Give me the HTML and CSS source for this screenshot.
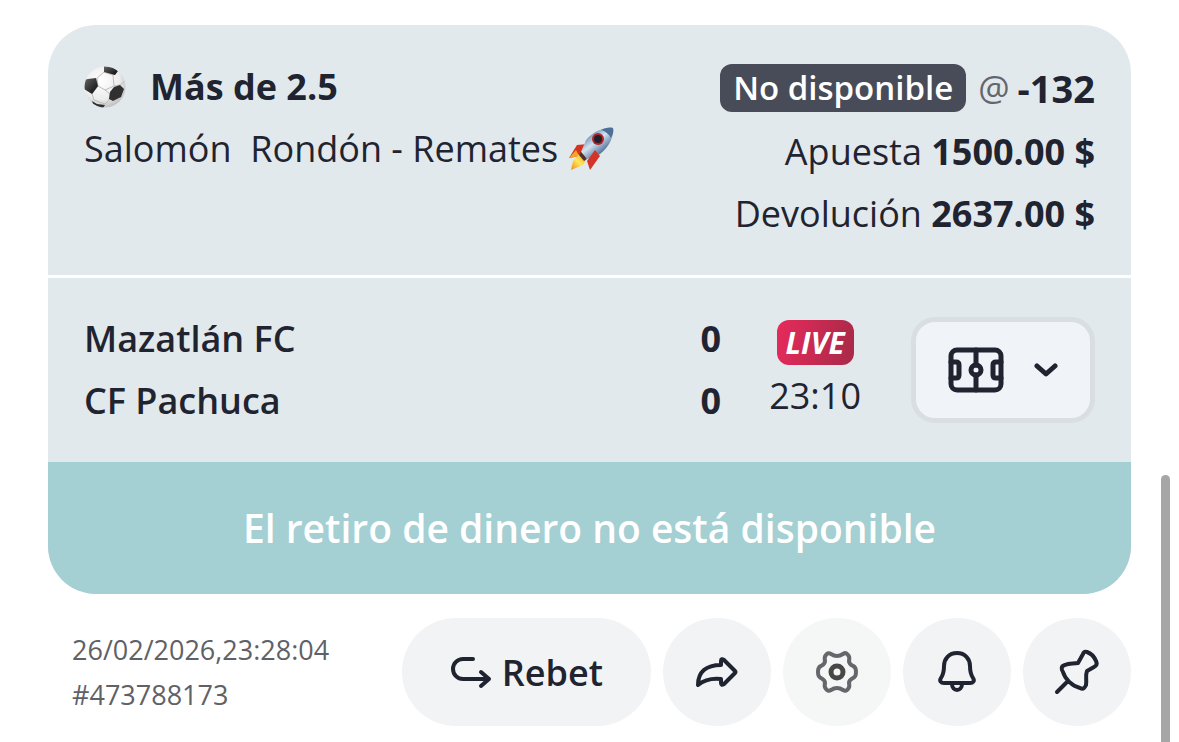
FILE: index.html
```html
<!DOCTYPE html>
<html lang="es">
<head>
    <meta charset="UTF-8">
    <meta name="viewport" content="width=device-width, initial-scale=1.0">
    <title>Apuesta #473788173</title>
    <link rel="stylesheet" href="styles.css">
</head>
<body>
    <main class="page">
        <article class="bet-card">
            <section class="bet-info">
                <div class="bet-pick">
                    <h1 class="pick-title">
                        <svg class="ball" viewBox="0 0 42 42" aria-hidden="true">
                            <defs>
                                <radialGradient id="ballShade" cx="0.4" cy="0.35" r="0.65">
                                    <stop offset="0" stop-color="#ffffff"/>
                                    <stop offset="0.7" stop-color="#ececec"/>
                                    <stop offset="1" stop-color="#c4c4c4"/>
                                </radialGradient>
                                <linearGradient id="patchShade" x1="0" y1="0" x2="1" y2="1">
                                    <stop offset="0" stop-color="#666"/>
                                    <stop offset="1" stop-color="#080808"/>
                                </linearGradient>
                                <clipPath id="ballClip"><circle cx="21" cy="21" r="20.5"/></clipPath>
                            </defs>
                            <circle cx="21" cy="21" r="20.5" fill="url(#ballShade)"/>
                            <g clip-path="url(#ballClip)">
                                <path d="M13 12L20 6L29 9L30 20L21 24L14 20Z M14 20L8 28L10 34L21 38L25 34L26 28L21 24 M30 20L36 19L41 15 M29 9L33 6" fill="none" stroke="#bdbdbd" stroke-width="1"/>
                                <path d="M20 0L30 1L34 5L31 9L20 6Z" fill="url(#patchShade)"/>
                                <path d="M0 14L4 13L12 12L14 20L8 28L0 23Z" fill="url(#patchShade)"/>
                                <path d="M30 21L36 19L40 23L37 31L29 35L25 33L26 26Z" fill="#303030"/>
                                <path d="M8 35L13 38L21 39L19 42L10 41Z" fill="#303030"/>
                            </g>
                        </svg>
                        Más de 2.5
                    </h1>
                    <p class="pick-market">Salomón&nbsp; Rondón - Remates
                        <svg class="rocket" viewBox="0 0 46 46" role="img" aria-label="cohete">
                            <defs>
                                <linearGradient id="hull" x1="0.2" y1="0.2" x2="0.7" y2="0.8">
                                    <stop offset="0" stop-color="#5f86ae"/>
                                    <stop offset="0.45" stop-color="#d5e2ee"/>
                                    <stop offset="1" stop-color="#466a96"/>
                                </linearGradient>
                                <linearGradient id="flame" x1="1" y1="0" x2="0" y2="1">
                                    <stop offset="0" stop-color="#f5a21b"/>
                                    <stop offset="0.5" stop-color="#ffe65a"/>
                                    <stop offset="1" stop-color="#f08a1a"/>
                                </linearGradient>
                            </defs>
                            <path d="M20 18L9 19L1 32L12 30L17 32Z" fill="#d8321f"/>
                            <path d="M1 32L8 24L11 30Z" fill="#f6a52c"/>
                            <path d="M11 28L18 34L15 39L3 44L5 35Z" fill="url(#flame)"/>
                            <path d="M45 2C35 1 25 6 18 14L13 26L19 33L32 28C40 22 46 12 45 2Z" fill="url(#hull)"/>
                            <path d="M45 2C41 1 37 2 33 4C37 5 41 8 43 12C45 8 46 5 45 2Z" fill="#4f7096"/>
                            <path d="M13 26L19 33L16 35L11 29Z" fill="#4a3230"/>
                            <path d="M27 24L32 30L22 44L19 35Z" fill="#d43428"/>
                            <circle cx="30" cy="13" r="6" fill="#b3242a"/>
                            <circle cx="30" cy="13" r="4" fill="#241e2b"/>
                        </svg>
                    </p>
                </div>
                <div class="bet-amounts">
                    <p class="odds"><span class="status">No disponible</span><span class="at">@</span><strong class="odds-value">-132</strong></p>
                    <p>Apuesta <strong>1500.00 $</strong></p>
                    <p>Devolución <strong>2637.00 $</strong></p>
                </div>
            </section>

            <section class="match">
                <div class="teams">
                    <div class="team"><span>Mazatlán FC</span><strong>0</strong></div>
                    <div class="team"><span>CF Pachuca</span><strong>0</strong></div>
                </div>
                <div class="clock">
                    <span class="live">LIVE</span>
                    <time>23:10</time>
                </div>
                <button class="field-btn" type="button" aria-label="Ver campo">
                    <svg class="icon-field" viewBox="0 0 56 46" aria-hidden="true">
                        <rect x="3" y="3" width="50" height="40" rx="6"/>
                        <path d="M28 3V18M28 28V43M3 15H8Q11 15 11 18V28Q11 31 8 31H3M53 15H48Q45 15 45 18V28Q45 31 48 31H53"/>
                        <circle cx="28" cy="23" r="5"/>
                    </svg>
                    <svg class="icon-chevron" viewBox="0 0 24 14" aria-hidden="true">
                        <path d="M3 3L12 11L21 3"/>
                    </svg>
                </button>
            </section>

            <button class="cashout" type="button" disabled>El retiro de dinero no está disponible</button>
        </article>

        <footer class="bet-footer">
            <div class="bet-meta">
                <time>26/02/2026,23:28:04</time>
                <span>#473788173</span>
            </div>
            <div class="actions">
                <button class="action rebet" type="button">
                    <svg class="icon" viewBox="0 0 42 42" aria-hidden="true">
                        <path d="M23 8H13A10 10 0 0 0 13 28H39M31 21L39 28L31 35"/>
                    </svg>
                    Rebet
                </button>
                <button class="action" type="button" aria-label="Compartir">
                    <svg class="icon" viewBox="0 0 42 42" aria-hidden="true">
                        <path d="M25 14V10Q25 7 28 9L39 20Q40 21 39 22L28 33Q25 35 25 32V28C15 27 8 29 2 34C2 21 10 14 25 14Z"/>
                    </svg>
                </button>
                <button class="action settings" type="button" aria-label="Ajustes">
                    <svg class="icon" viewBox="0 0 42 42" aria-hidden="true">
                        <path d="M15 3Q12 1 10 4Q8 6 9 10Q9 13 5 15Q2 16 2 21Q2 26 5 27Q9 29 9 32Q8 36 10 38Q12 41 15 39Q18 37 21 37Q24 37 27 39Q30 41 32 38Q34 36 33 32Q33 29 37 27Q40 26 40 21Q40 16 37 15Q33 13 33 10Q34 6 32 4Q30 1 27 3Q24 5 21 5Q18 5 15 3Z"/>
                        <circle class="hub" cx="21" cy="21" r="6"/>
                    </svg>
                </button>
                <button class="action" type="button" aria-label="Notificaciones">
                    <svg class="icon" viewBox="0 0 42 42" aria-hidden="true">
                        <path d="M21 2C13 2 8 8 8 15C8 22 7 24 5 27C3 30 5 32 8 32H34C37 32 39 30 37 27C35 24 34 22 34 15C34 8 29 2 21 2ZM16 33C16 41 26 41 26 33"/>
                    </svg>
                </button>
                <button class="action" type="button" aria-label="Fijar">
                    <svg class="icon" viewBox="0 0 42 42" aria-hidden="true">
                        <path d="M1 41L12 30M22 12C17 13 13 12 9 14C5 15 5 18 7 21C9 28 16 35 24 37C28 39 29 36 30 34C31 29 29 25 31 20L38 16Q42 14 40 10Q37 3 31 1Q28 0 27 3Z"/>
                    </svg>
                </button>
            </div>
        </footer>
    </main>
    <div class="scroll-thumb"></div>
</body>
</html>
```
FILE: styles.css
```css
* {
    box-sizing: border-box;
}

body {
    margin: 0;
    background: #fff;
    color: #1f2430;
    font-family: "Open Sans", "Noto Sans", sans-serif;
    font-size: 36px;
    line-height: 62px;
}

h1,
p {
    margin: 0;
    font-size: inherit;
}

strong {
    font-weight: 700;
}

button {
    border: none;
    color: inherit;
    font-family: inherit;
    font-size: inherit;
    cursor: pointer;
}

svg {
    flex: none;
}

.page {
    padding: 25px 48px 16px;
}

/* card */
.bet-card {
    border-radius: 48px;
    overflow: hidden;
    background: #e2e9ec;
}

.bet-info {
    display: flex;
    justify-content: space-between;
    padding: 31px 36px 30px;
    border-bottom: 3px solid #fff;
}

.pick-title {
    display: flex;
    align-items: center;
    gap: 24px;
}

.ball {
    width: 42px;
    height: 42px;
}

.pick-market {
    display: flex;
    align-items: center;
    gap: 10px;
}

.rocket {
    width: 46px;
    height: 46px;
}

.bet-amounts {
    text-align: right;
}

.odds {
    display: flex;
    align-items: center;
    justify-content: flex-end;
    padding: 1px 0 2px;
}

.status {
    padding: 0 13px;
    border-radius: 12px;
    background: #474c58;
    color: #fff;
    font-size: 33px;
    font-weight: 600;
    line-height: 48px;
}

.at {
    margin: 0 8px 0 12px;
    color: #62676f;
    font-size: 35px;
}

.odds-value {
    font-size: 38px;
}

/* match */
.match {
    display: flex;
    align-items: center;
    padding: 30px 36px;
}

.teams {
    flex: 1;
    font-weight: 600;
}

.team {
    display: flex;
    justify-content: space-between;
}

.clock {
    display: flex;
    flex-direction: column;
    align-items: center;
    margin: 0 50px 0 48px;
    padding-top: 6px;
}

.live {
    padding: 0 9px;
    border-radius: 12px;
    background: linear-gradient(100deg, #e62a5c, #a82a48);
    color: #fff;
    font-size: 30px;
    font-style: italic;
    font-weight: 700;
    line-height: 45px;
}

.field-btn {
    display: flex;
    align-items: center;
    gap: 30px;
    padding: 25px 32px;
    border: 5px solid #d9dee3;
    border-radius: 24px;
    background: #f0f3f8;
}

.icon-field,
.icon-chevron,
.icon {
    fill: none;
    stroke: currentColor;
    stroke-width: 4;
    stroke-linecap: round;
    stroke-linejoin: round;
}

.icon-field {
    width: 56px;
    height: 46px;
    stroke-width: 5;
}

.icon-chevron {
    width: 24px;
    height: 14px;
    stroke-width: 5;
}

.cashout {
    display: block;
    width: 100%;
    padding: 35px;
    background: #a4cfd3;
    color: #fff;
    font-size: 39px;
    font-weight: 600;
    line-height: 62px;
    cursor: default;
}

/* footer */
.bet-footer {
    display: flex;
    align-items: center;
    justify-content: space-between;
    padding: 24px 0 0 24px;
}

.bet-meta {
    display: flex;
    flex-direction: column;
    color: #5f6166;
    font-size: 27px;
    line-height: 45px;
}

.actions {
    display: flex;
    gap: 12px;
}

.action {
    display: flex;
    align-items: center;
    justify-content: center;
    width: 108px;
    height: 108px;
    padding: 0;
    border-radius: 54px;
    background: #f2f3f5;
    font-weight: 600;
}

.rebet {
    gap: 10px;
    width: auto;
    padding: 0 48px;
}

.icon {
    width: 42px;
    height: 42px;
    overflow: visible;
}

.settings {
    background: #f5f6f6;
    color: #66676b;
}

.hub {
    stroke: #4a4846;
    stroke-width: 5;
}

.scroll-thumb {
    position: fixed;
    top: 475px;
    right: 9px;
    bottom: 0;
    width: 9px;
    border-radius: 5px 5px 0 0;
    background: #a6a6a6;
}
```
